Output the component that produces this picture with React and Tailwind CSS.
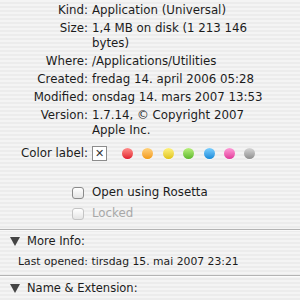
import React from 'react';

const ROWS = [
  { label: 'Kind:', lines: ['Application (Universal)'] },
  { label: 'Size:', lines: ['1,4 MB on disk (1 213 146', 'bytes)'] },
  { label: 'Where:', lines: ['/Applications/Utilities'] },
  { label: 'Created:', lines: ['fredag 14. april 2006 05:28'] },
  { label: 'Modified:', lines: ['onsdag 14. mars 2007 13:53'] },
  { label: 'Version:', lines: ['1.7.14, © Copyright 2007', 'Apple Inc.'] },
];

const DOTS = [
  'from-[#ff8a8a] to-[#e0102c]',
  'from-[#ffd27a] to-[#f29a00]',
  'from-[#fff27a] to-[#e0c400]',
  'from-[#b8f07a] to-[#5cb82a]',
  'from-[#7ad0ff] to-[#0f8ad8]',
  'from-[#ff9ad8] to-[#e0369a]',
  'from-[#d6d6d6] to-[#8f8f8f]',
];

function Triangle() {
  return (
    <svg width="10" height="9" viewBox="0 0 10 9" className="shrink-0">
      <path d="M0 0 L10 0 L5 9 Z" fill="#444" />
    </svg>
  );
}

function Checkbox({ disabled }) {
  return (
    <span
      className={`w-[12px] h-[12px] rounded-[3px] border shrink-0 bg-gradient-to-b from-white to-[#e4e4e4] ${
        disabled ? 'border-[#c4c4c4]' : 'border-[#8a8a8a]'
      }`}
    />
  );
}

function Separator() {
  return <div className="h-[2px] border-t border-[#b4b4b4] bg-white/70" />;
}

export default function App() {
  return (
    <div
      className="w-[300px] h-[300px] overflow-hidden text-[11.8px] leading-[15px] text-[#1c1c1c] bg-[repeating-linear-gradient(0deg,#ececec_0px,#ececec_2px,#f4f4f4_2px,#f4f4f4_4px)]"
      style={{ fontFamily: '"DejaVu Sans", "Lucida Grande", sans-serif' }}
    >
      <div className="pt-[3px] flex flex-col gap-[3px]">
        {ROWS.map(r => (
          <div key={r.label} className="grid grid-cols-[88px_1fr] gap-x-[4px]">
            <div className="text-right whitespace-nowrap">{r.label}</div>
            <div>
              {r.lines.map(l => (
                <div key={l} className="whitespace-nowrap">{l}</div>
              ))}
            </div>
          </div>
        ))}
      </div>

      <div className="grid grid-cols-[88px_1fr] gap-x-[4px] items-center mt-[7px] h-[16px]">
        <div className="text-right whitespace-nowrap">Color label:</div>
        <div className="flex items-center">
          <span className="w-[15px] h-[15px] border border-[#8c8c8c] bg-white flex items-center justify-center text-[11px] font-bold text-[#333] leading-none">
            ✕
          </span>
          <div className="flex items-center gap-[9.4px] ml-[15px]">
            {DOTS.map(c => (
              <span
                key={c}
                className={`w-[11px] h-[11px] rounded-full bg-gradient-to-b ${c} shadow-[0_1px_0_rgba(255,255,255,0.6)]`}
              />
            ))}
          </div>
        </div>
      </div>

      <div className="mt-[24px] pl-[72px] flex flex-col gap-[6px]">
        <div className="flex items-center gap-[8px]">
          <Checkbox />
          <span>Open using Rosetta</span>
        </div>
        <div className="flex items-center gap-[8px] text-[#a8a8a8]">
          <Checkbox disabled />
          <span>Locked</span>
        </div>
      </div>

      <div className="mt-[8px]">
        <Separator />
      </div>

      <div className="flex items-center gap-[7px] pl-[10px] mt-[3px] text-[11.5px]">
        <Triangle />
        <span>More Info:</span>
      </div>
      <div className="pl-[18px] mt-[5px] text-[10.8px] whitespace-nowrap">Last opened: tirsdag 15. mai 2007 23:21</div>

      <div className="mt-[6px]">
        <Separator />
      </div>

      <div className="flex items-center gap-[7px] pl-[10px] mt-[4px] text-[11.5px]">
        <Triangle />
        <span>Name &amp; Extension:</span>
      </div>
    </div>
  );
}
